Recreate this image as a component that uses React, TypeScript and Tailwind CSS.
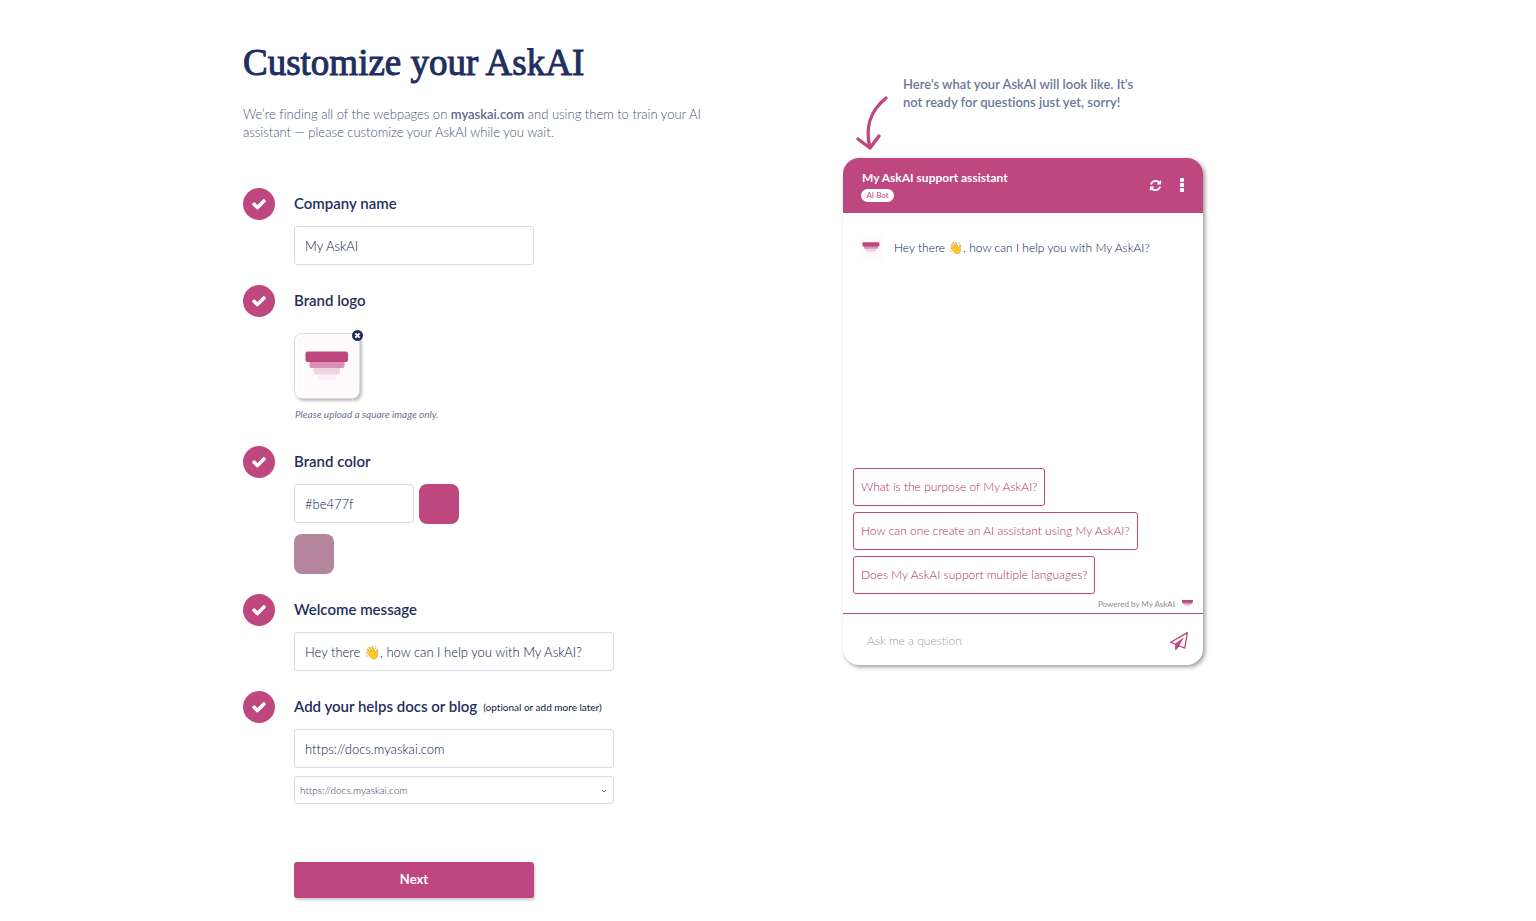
import { useState } from "react";
import type { ReactNode } from "react";

const CHECK =
  "M1671 566q0 40-28 68l-724 724-136 136q-28 28-68 28t-68-28l-136-136-362-362q-28-28-28-68t28-68l136-136q28-28 68-28t68 28l294 295 656-657q28-28 68-28t68 28l136 136q28 28 28 68z";
const REFRESH =
  "M1639 1056q0 5-1 7-64 268-268 434.5t-478 166.5q-146 0-282.5-55t-243.5-157l-129 129q-19 19-45 19t-45-19-19-45v-448q0-26 19-45t45-19h448q26 0 45 19t19 45-19 45l-137 137q71 66 161 102t187 36q134 0 250-65t186-179q11-17 53-117 8-23 30-23h192q13 0 22.5 9.5t9.5 22.5zm25-800v448q0 26-19 45t-45 19h-448q-26 0-45-19t-19-45 19-45l138-138q-148-137-349-137-134 0-250 65t-186 179q-11 17-53 117-8 23-30 23h-199q-13 0-22.5-9.5t-9.5-22.5v-7q65-268 270-434.5t480-166.5q146 0 284 55.5t245 156.5l130-129q19-19 45-19t45 19 19 45z";
const PLANE =
  "M1764 11q33 24 27 64l-256 1536q-5 29-32 45-14 8-31 8-11 0-24-5l-527-215-298 327q-18 21-47 21-14 0-23-4-19-7-30-23.5t-11-36.5v-452l-472-193q-37-14-40-55-3-39 32-59l1664-960q35-21 68 2zm-342 1499l221-1323-1434 827 336 137 863-639-478 797z";

const fieldClass =
  "block h-[39px] rounded-[3px] border border-[#d9dae8] bg-white px-2.5 text-[13px] font-light text-[#091747] outline-none focus:border-[#be477f]";

const suggestions = [
  "What is the purpose of My AskAI?",
  "How can one create an AI assistant using My AskAI?",
  "Does My AskAI support multiple languages?",
];

function Glyph({ path, className }: { path: string; className: string }) {
  return (
    <svg viewBox="0 0 1792 1792" fill="currentColor" aria-hidden="true" className={className}>
      <path d={path} />
    </svg>
  );
}

function Logo({ className }: { className: string }) {
  return (
    <svg viewBox="0 0 60 60" aria-hidden="true" className={className}>
      <rect width="60" height="60" rx="6" fill="#fffafc" />
      <rect x="21" y="34" width="18" height="10" rx="2" fill="#fdeff6" />
      <rect x="16.5" y="29" width="26.5" height="9.5" rx="2" fill="#f0d3e1" />
      <rect x="12.5" y="23" width="35" height="9" rx="2" fill="#d890b4" />
      <rect x="8.5" y="15.5" width="42.5" height="10.5" rx="2" fill="#be477f" />
    </svg>
  );
}

function LogoMark({ className }: { className: string }) {
  return (
    <svg viewBox="0 0 44 28" aria-hidden="true" className={className}>
      <rect x="12" y="19" width="20" height="9" rx="2" fill="#fdeff6" />
      <rect x="8" y="14" width="28" height="9" rx="2" fill="#f0d3e1" />
      <rect x="4" y="8" width="36" height="9" rx="2" fill="#d890b4" />
      <rect width="44" height="11" rx="2" fill="#be477f" />
    </svg>
  );
}

function Step({
  title,
  htmlFor,
  note,
  children,
}: {
  title: string;
  htmlFor: string;
  note?: string;
  children: ReactNode;
}) {
  return (
    <section className="flex gap-[19px]">
      <span className="flex size-8 shrink-0 items-center justify-center rounded-full bg-[#be477f] text-white">
        <Glyph path={CHECK} className="size-4" />
      </span>
      <div className="min-w-0 flex-1">
        <div className="mb-1.5 flex h-8 items-center pb-0.5">
          <label htmlFor={htmlFor} className="text-[15px] leading-5 font-semibold text-[#1f2f5e]">
            {title}
          </label>
          {note && <span className="ml-1.5 pt-0.5 text-[10px] leading-4 text-[#091747]">{note}</span>}
        </div>
        {children}
      </div>
    </section>
  );
}

export default function App() {
  const [company, setCompany] = useState("My AskAI");
  const [color, setColor] = useState("#be477f");
  const [welcome, setWelcome] = useState("Hey there 👋, how can I help you with My AskAI?");
  const [docs, setDocs] = useState("https://docs.myaskai.com");

  return (
    <main className="min-h-screen bg-white px-6 pb-[23px] font-['Lato','Noto_Color_Emoji',sans-serif] [&_*]:[font-variant-ligatures:none]">
      <div className="mx-auto flex max-w-[1050px] flex-wrap lg:flex-nowrap">
        <div className="w-full max-w-[600px] pt-9">
          <h1 className="font-['Liberation_Serif',serif] text-[37px] leading-[54px] text-[#1f2f5e] [-webkit-text-stroke:1px_#1f2f5e]">
            Customize your AskAI
          </h1>
          <p className="mt-[15px] max-w-[480px] text-[13px] leading-[18px] font-light text-[#44537e]">
            We’re finding all of the webpages on <b className="font-semibold text-[#5c6a91]">myaskai.com</b> and using
            them to train your AI
            <br className="hidden sm:inline" /> assistant — please customize your AskAI while you wait.
          </p>

          <form className="mt-[47px]" onSubmit={(e) => e.preventDefault()}>
            <div className="flex flex-col gap-5">
              <Step title="Company name" htmlFor="company">
                <input
                  id="company"
                  value={company}
                  onChange={(e) => setCompany(e.target.value)}
                  className={`${fieldClass} w-60`}
                />
              </Step>

              <Step title="Brand logo" htmlFor="logo">
                <div className="relative mt-4 size-[66px]">
                  <button
                    id="logo"
                    type="button"
                    aria-label="Upload brand logo"
                    className="flex size-full items-center justify-center rounded-lg border border-[#d9dae8] bg-white shadow-[2px_2px_3px_rgba(0,0,0,0.25)]"
                  >
                    <Logo className="size-[60px]" />
                  </button>
                  <button type="button" aria-label="Remove logo" className="absolute -top-[3px] -right-[3px]">
                    <svg viewBox="0 0 12 12" className="block size-[11px]" aria-hidden="true">
                      <circle cx="6" cy="6" r="6" fill="#1f2f5e" />
                      <path d="M3.7 3.7l4.6 4.6M8.3 3.7l-4.6 4.6" stroke="#fff" strokeWidth="2.2" />
                    </svg>
                  </button>
                </div>
                <p className="mt-1.5 pb-[3px] pl-px text-[10px] leading-[18px] text-[#6d7591] italic">
                  Please upload a square image only.
                </p>
              </Step>

              <Step title="Brand color" htmlFor="color">
                <div className="flex gap-[5px]">
                  <input
                    id="color"
                    value={color}
                    onChange={(e) => setColor(e.target.value)}
                    className={`${fieldClass} w-[120px]`}
                  />
                  <button
                    type="button"
                    aria-label="Use #be477f"
                    onClick={() => setColor("#be477f")}
                    className="size-10 rounded-lg bg-[#be477f]"
                  />
                </div>
                <button
                  type="button"
                  aria-label="Use #b3869c"
                  onClick={() => setColor("#b3869c")}
                  className="mt-2.5 block size-10 rounded-lg bg-[#b3869c]"
                />
              </Step>

              <Step title="Welcome message" htmlFor="welcome">
                <input
                  id="welcome"
                  value={welcome}
                  onChange={(e) => setWelcome(e.target.value)}
                  className={`${fieldClass} w-full max-w-80`}
                />
              </Step>

              <Step title="Add your helps docs or blog" htmlFor="docs" note="(optional or add more later)">
                <input
                  id="docs"
                  value={docs}
                  onChange={(e) => setDocs(e.target.value)}
                  className={`${fieldClass} w-full max-w-80`}
                />
                <div className="relative mt-2 max-w-80">
                  <select
                    aria-label="Documentation source"
                    className="block h-7 w-full appearance-none rounded-[3px] border border-[#d9dae8] bg-white px-[5px] text-[10px] font-light text-[#2b3550]"
                  >
                    <option>https://docs.myaskai.com</option>
                  </select>
                  <svg
                    viewBox="0 0 6 4"
                    fill="none"
                    stroke="#777"
                    aria-hidden="true"
                    className="pointer-events-none absolute top-[13px] right-[7px] h-1 w-1.5"
                  >
                    <path d="M1 1l2 2 2-2" />
                  </svg>
                </div>
              </Step>
            </div>
            <button
              type="submit"
              className="mt-[58px] ml-[51px] block h-9 w-60 rounded-[3px] bg-[#be477f] text-[13px] font-bold text-white shadow-[1px_2px_3px_rgba(0,0,0,0.2)]"
            >
              Next
            </button>
          </form>
        </div>

        <aside className="w-full max-w-[360px] pt-[75px]">
          <div className="flex h-[83px] gap-3.5 pl-3">
            <svg
              viewBox="0 0 34 58"
              fill="none"
              stroke="#be477f"
              strokeWidth="3.4"
              strokeLinecap="round"
              strokeLinejoin="round"
              aria-hidden="true"
              className="mt-5 h-[58px] w-[34px]"
            >
              <path d="M31 3C14 17 10 33 15 53M3 44l12 9 9-12" />
            </svg>
            <p className="w-60 text-[13px] leading-[18px] font-semibold text-[#6b7799]">
              Here's what your AskAI will look like. It's not ready for questions just yet, sorry!
            </p>
          </div>

          <div className="overflow-hidden rounded-2xl bg-white shadow-[2px_2px_4px_rgba(0,0,0,0.4)]">
            <header className="flex h-[55px] items-center justify-between bg-[#be477f] pr-[15px] pl-[18px] text-white">
              <div>
                <h2 className="pl-px text-xs leading-4 font-bold">My AskAI support assistant</h2>
                <span className="mt-[3px] block h-[13px] w-[33px] rounded-full bg-white text-center text-[8px] leading-3 text-[#be477f]">
                  AI Bot
                </span>
              </div>
              <div className="flex items-center gap-3.5">
                <button type="button" aria-label="Restart conversation">
                  <Glyph path={REFRESH} className="block size-[13px]" />
                </button>
                <button type="button" aria-label="More options">
                  <svg viewBox="0 0 12 16" fill="currentColor" aria-hidden="true" className="block h-4 w-3">
                    <rect x="4" y="0" width="4" height="4" rx="0.7" />
                    <rect x="4" y="5" width="4" height="4" rx="0.7" />
                    <rect x="4" y="10" width="4" height="4" rx="0.7" />
                  </svg>
                </button>
              </div>
            </header>

            <div className="flex min-h-[400px] flex-col">
              <div className="flex items-center gap-[11px] pt-[23px] pl-4">
                <Logo className="size-6" />
                <p className="text-xs leading-5 font-light text-[#091747]">{welcome}</p>
              </div>
              <div className="mt-auto flex flex-col items-start gap-1.5 pl-2.5">
                {suggestions.map((text) => (
                  <button
                    key={text}
                    type="button"
                    className="h-[38px] rounded-[3px] border border-[#be477f] px-[7px] text-xs font-light text-[#b02a6a]"
                  >
                    {text}
                  </button>
                ))}
              </div>
              <div className="flex h-[19px] items-center justify-end gap-[7px] pr-2.5 text-[8px] text-[#8d8d93]">
                Powered by My AskAI
                <LogoMark className="h-[7px] w-[11px]" />
              </div>
            </div>

            <div className="flex h-[52px] items-center border-t border-[#be477f] pt-0.5 pr-[15px] pl-6">
              <input
                aria-label="Ask me a question"
                placeholder="Ask me a question"
                className="min-w-0 flex-1 bg-transparent text-xs font-light outline-none placeholder:text-[#a0a0a6]"
              />
              <button type="button" aria-label="Send" className="text-[#be477f]">
                <Glyph path={PLANE} className="block size-[18px]" />
              </button>
            </div>
          </div>
        </aside>
      </div>
    </main>
  );
}
